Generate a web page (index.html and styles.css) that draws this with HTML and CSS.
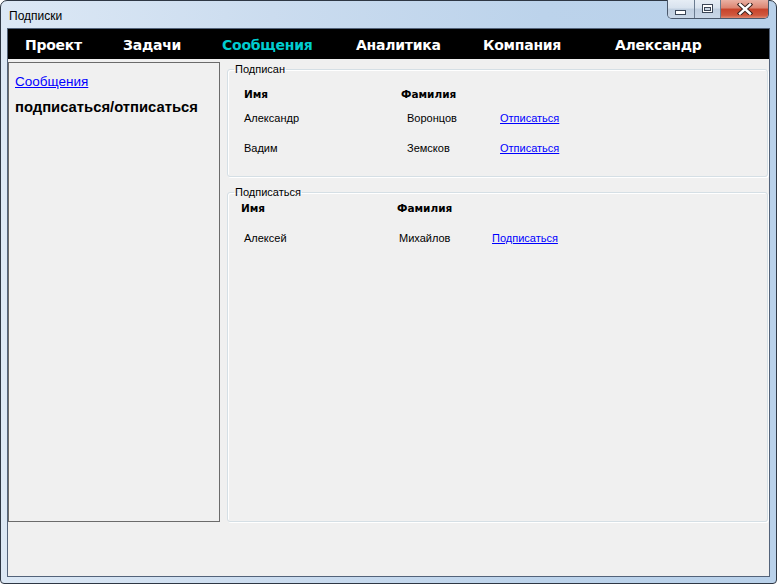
FILE: index.html
```html
<!DOCTYPE html>
<html lang="ru">
<head>
<meta charset="utf-8">
<title>Подписки</title>
<link rel="stylesheet" href="styles.css">
</head>
<body>
<div class="window">
  <div class="titlebar">
    <span class="title">Подписки</span>
    <div class="caption-buttons">
      <div class="cb cb-min">
        <svg width="12" height="6" viewBox="0 0 12 6"><rect x="0.5" y="1.5" width="10" height="4" fill="#fff" stroke="#3b4656"/></svg>
      </div>
      <div class="cb cb-max">
        <svg width="12" height="10" viewBox="0 0 12 10"><rect x="0.5" y="0.5" width="10" height="8" fill="#fff" stroke="#3b4656"/><rect x="2.5" y="3.5" width="6" height="3" fill="#c9d5e3" stroke="#3b4656"/></svg>
      </div>
      <div class="cb cb-close">
        <svg width="16" height="12" viewBox="0 0 16 12"><path d="M3 1.5 L13 10.5 M13 1.5 L3 10.5" stroke="#3a2420" stroke-width="4.4" stroke-linecap="square"/><path d="M3 1.5 L13 10.5 M13 1.5 L3 10.5" stroke="#fff" stroke-width="2.4" stroke-linecap="square"/></svg>
      </div>
    </div>
  </div>
  <div class="client">
    <nav class="menu">
      <span class="menu-item">Проект</span>
      <span class="menu-item">Задачи</span>
      <span class="menu-item active">Сообщения</span>
      <span class="menu-item">Аналитика</span>
      <span class="menu-item">Компания</span>
      <span class="menu-item">Александр</span>
    </nav>
    <div class="main">
      <aside class="side">
        <a href="#" class="side-link">Сообщения</a>
        <div class="side-bold">подписаться/отписаться</div>
      </aside>
      <div class="groups">
        <fieldset class="group g1">
          <legend>Подписан</legend>
          <div class="row head h1">
            <span class="c1">Имя</span>
            <span>Фамилия</span>
          </div>
          <div class="row item r1">
            <span class="c1">Александр</span>
            <span class="c2">Воронцов</span>
            <a href="#" class="link">Отписаться</a>
          </div>
          <div class="row item r2">
            <span class="c1">Вадим</span>
            <span class="c2">Земсков</span>
            <a href="#" class="link">Отписаться</a>
          </div>
        </fieldset>
        <fieldset class="group g2">
          <legend>Подписаться</legend>
          <div class="row head h2">
            <span class="c1">Имя</span>
            <span>Фамилия</span>
          </div>
          <div class="row item r3">
            <span class="c1">Алексей</span>
            <span class="c2">Михайлов</span>
            <a href="#" class="link">Подписаться</a>
          </div>
        </fieldset>
      </div>
    </div>
  </div>
</div>
</body>
</html>
```
FILE: styles.css
```css
* { box-sizing: border-box; }
html, body { margin: 0; padding: 0; }
body {
  width: 777px;
  height: 584px;
  overflow: hidden;
  background: #ffffff;
  font-family: "Liberation Sans", Arial, sans-serif;
}
.window {
  width: 777px;
  height: 584px;
  border: 1px solid #2e3744;
  border-radius: 7px 7px 4px 4px;
  background: linear-gradient(to right, #dce8f5 0%, #cbdcef 35%, #bcd3eb 70%, #b9d1ea 100%);
  display: flex;
  flex-direction: column;
}
.titlebar {
  height: 27px;
  display: flex;
  justify-content: space-between;
  align-items: flex-start;
  padding-left: 8px;
  padding-right: 7px;
}
.title {
  font-size: 12px;
  line-height: 14px;
  padding-top: 8px;
  color: #000;
}
.caption-buttons {
  display: flex;
  height: 19px;
  margin-top: -1px;
  border: 1px solid #4a586b;
  border-top: none;
  border-radius: 0 0 5px 5px;
  overflow: hidden;
}
.cb {
  height: 18px;
  display: flex;
  align-items: center;
  justify-content: center;
}
.cb-min, .cb-max {
  background: linear-gradient(#e6edf5 0%, #d8e2ee 45%, #c0cfe0 50%, #c9d7e7 100%);
  border-right: 1px solid #6a7b90;
}
.cb-min { width: 27px; padding-top: 5px; }
.cb-max { width: 26px; }
.cb-close {
  width: 47px;
  background: linear-gradient(#eab1a4 0%, #dc8470 45%, #c7432b 50%, #d0583e 85%, #e08a72 100%);
}
.client {
  flex: 1;
  margin: 0 6px 6px;
  border: 1px solid #53637a;
  background: #f0f0f0;
  display: flex;
  flex-direction: column;
}
.menu {
  height: 30px;
  background: #000;
  display: grid;
  grid-template-columns: 98px 99px 134px 127px 132px auto;
  align-items: center;
  padding-left: 17px;
  font-family: "DejaVu Sans", Verdana, sans-serif;
  font-weight: bold;
  font-size: 14px;
  letter-spacing: -0.25px;
  color: #ffffff;
}
.menu-item { white-space: nowrap; line-height: 18px; padding-top: 1px; }
.menu-item.active { color: #00cdd0; }
.main {
  display: flex;
  padding-top: 3px;
  gap: 7px;
}
.side {
  width: 212px;
  height: 460px;
  border: 1px solid #6b6b6b;
  padding: 11px 0 0 6px;
}
.side-link {
  display: block;
  width: max-content;
  font-size: 13.5px;
  line-height: 16px;
  color: #0000ff;
  text-decoration: underline;
}
.side-bold {
  margin-top: 8px;
  font-size: 14.8px;
  line-height: 18px;
  font-weight: bold;
  color: #000;
}
.groups {
  width: 541px;
  display: flex;
  flex-direction: column;
}
.group {
  margin: 0;
  padding: 0;
  min-width: 0;
  border: 1px solid #d5dfe5;
  border-radius: 3px;
  box-shadow: 1px 1px 0 #ffffff, inset 1px 1px 0 #ffffff;
}
.group legend {
  margin-left: 6px;
  padding: 0 1px;
  font-size: 11px;
  line-height: 13px;
  color: #000;
}
.g1 { margin-top: 1px; padding-bottom: 21px; }
.g2 { margin-top: 9px; height: 336px; }
.row { display: flex; align-items: center; white-space: nowrap; }
.head {
  height: 16px;
  font-family: "DejaVu Sans", Verdana, sans-serif;
  font-weight: bold;
  font-size: 10.5px;
  color: #000;
}
.item {
  height: 15px;
  font-size: 11px;
  color: #000;
}
.h1 { margin-top: 10px; padding-left: 16px; }
.h1 .c1 { width: 157px; }
.r1 { margin-top: 8px; padding-left: 16px; }
.r2 { margin-top: 15px; padding-left: 16px; }
.r1 .c1, .r2 .c1 { width: 163px; }
.c2 { width: 93px; }
.h2 { margin-top: 1px; padding-left: 13px; }
.h2 .c1 { width: 156px; }
.r3 { margin-top: 14px; padding-left: 16px; }
.r3 .c1 { width: 155px; }
.link { color: #0000ff; text-decoration: underline; }
```
